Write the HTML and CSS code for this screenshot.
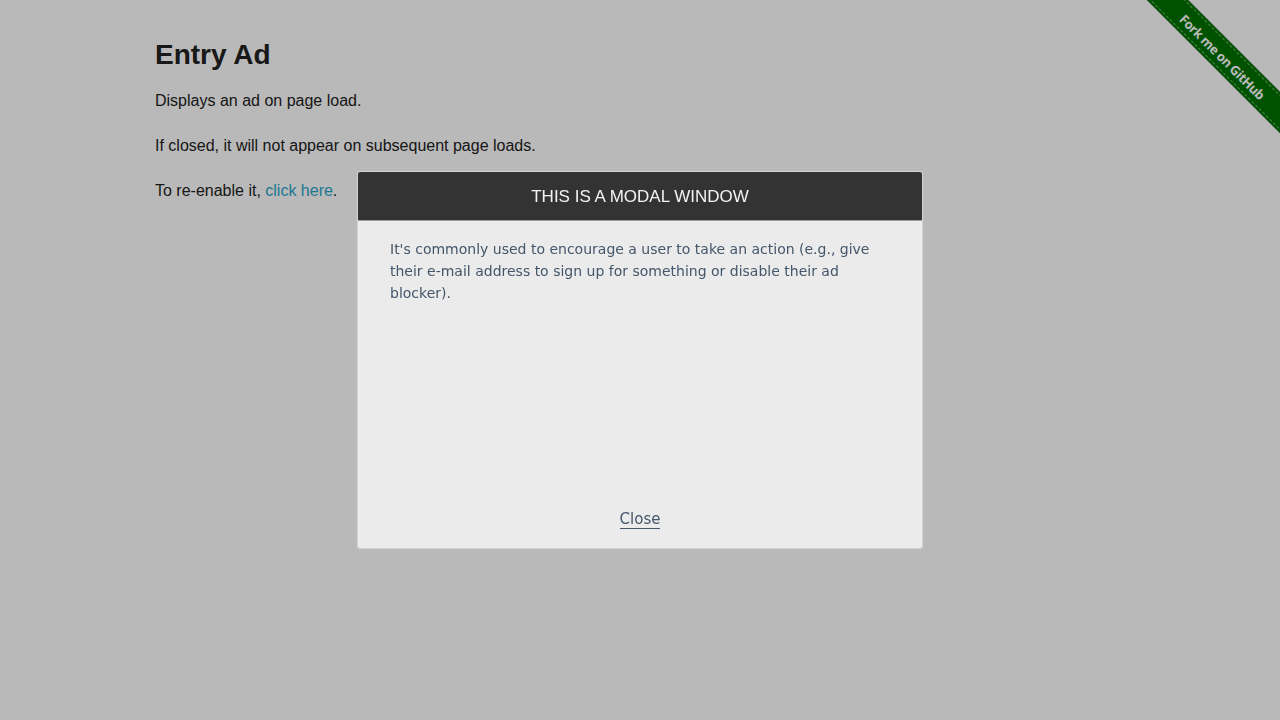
FILE: index.html
```html
<!DOCTYPE html>
<html lang="en">
<head>
<meta charset="utf-8">
<title>The Internet</title>
<link rel="stylesheet" href="styles.css">
</head>
<body>
<a class="ribbon" href="#"><span class="ribbon-band"><span class="ribbon-text">Fork me on GitHub</span></span></a>
<div class="row">
  <div class="example">
    <h3>Entry Ad</h3>
    <p>Displays an ad on page load.</p>
    <p>If closed, it will not appear on subsequent page loads.</p>
    <p>To re-enable it, <a class="link" href="#">click here</a>.</p>
  </div>
</div>
<div class="overlay">
  <div class="modal">
    <div class="modal-title"><h3>This is a modal window</h3></div>
    <div class="modal-body">
      <p>It's commonly used to encourage a user to take an action (e.g., give their e-mail address to sign up for something or disable their ad blocker).</p>
    </div>
    <div class="modal-footer"><p><span class="close">Close</span></p></div>
  </div>
</div>
</body>
</html>
```
FILE: styles.css
```css
html, body {
  margin: 0;
  padding: 0;
  background: #ffffff;
}
body {
  font-family: "Liberation Sans", Helvetica, Arial, sans-serif;
  color: #222222;
  font-size: 16px;
}
.row {
  width: 1000px;
  margin: 0 auto;
}
.example {
  padding: 0 15px;
}
.example h3 {
  font-size: 28px;
  font-weight: bold;
  line-height: 32px;
  margin: 39px 0 17px;
}
.example p {
  line-height: 25px;
  margin: 0 0 20px;
}
.link {
  color: #2ba6cb;
  text-decoration: none;
}

/* GitHub ribbon */
.ribbon {
  position: absolute;
  top: 0;
  right: 0;
  width: 149px;
  height: 149px;
  overflow: hidden;
  text-decoration: none;
}
.ribbon-band {
  position: absolute;
  left: -17px;
  top: 42px;
  width: 220px;
  height: 29px;
  box-sizing: border-box;
  background: #007200;
  transform: rotate(45deg);
  display: flex;
  align-items: center;
  justify-content: center;
  box-shadow: 0 0 1px rgba(0, 0, 0, 0.6);
}
.ribbon-band::before {
  content: "";
  position: absolute;
  left: 0;
  right: 0;
  top: 2px;
  bottom: 2px;
  border-top: 1px dashed rgba(255, 255, 255, 0.45);
  border-bottom: 1px dashed rgba(255, 255, 255, 0.45);
}
.ribbon-text {
  position: relative;
  top: 1px;
  left: -1px;
  font-family: "Open Sans", "Liberation Sans", sans-serif;
  font-weight: 700;
  font-size: 13px;
  letter-spacing: -0.5px;
  color: #ffffff;
}

/* overlay + modal */
.overlay {
  position: fixed;
  inset: 0;
  background: rgba(0, 0, 0, 0.275);
  display: flex;
  align-items: center;
  justify-content: center;
}
.modal {
  width: 566px;
  height: 378px;
  box-sizing: border-box;
  background: #ebebeb;
  border: 1px solid #d4d4d4;
  border-radius: 3px;
  display: flex;
  flex-direction: column;
  overflow: hidden;
}
.modal-title {
  height: 46px;
  padding-top: 2px;
  background: #333333;
  border-bottom: 1px solid #9c9c9c;
  display: flex;
  align-items: center;
  justify-content: center;
}
.modal-title h3 {
  margin: 0;
  font-family: "Liberation Sans", Helvetica, Arial, sans-serif;
  font-size: 17px;
  font-weight: normal;
  text-transform: uppercase;
  color: #f2f2f2;
}
.modal-body {
  flex: 1;
  padding: 17px 32px 0;
}
.modal-body p {
  margin: 0;
  font-family: "DejaVu Sans", sans-serif;
  font-size: 14px;
  line-height: 22px;
  color: #44566a;
}
.modal-footer {
  padding: 0 0 18px;
}
.modal-footer p {
  margin: 0;
  text-align: center;
  font-family: "DejaVu Sans", sans-serif;
  font-size: 15px;
  line-height: 22px;
  color: #44566a;
}
.close {
  border-bottom: 1px solid #44566a;
  cursor: pointer;
}
```
